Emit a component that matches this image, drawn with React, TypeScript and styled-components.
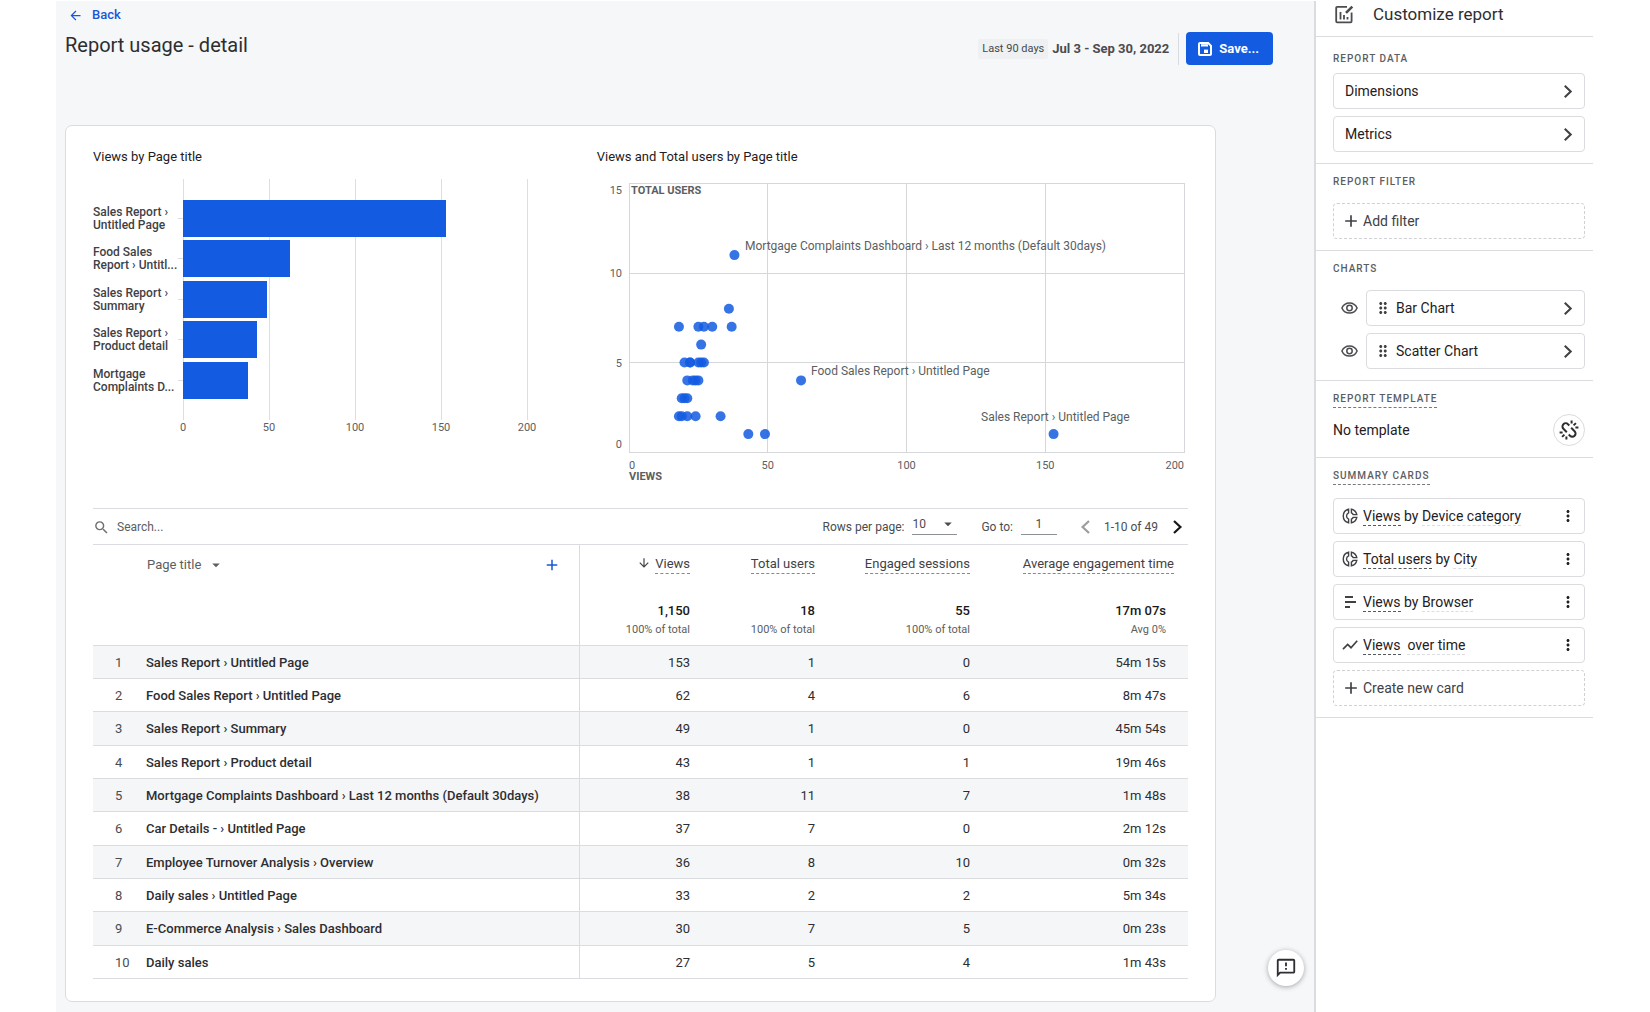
import React from "react";
import styled, { createGlobalStyle, css } from "styled-components";
import {
  MdAdd,
  MdArrowBack,
  MdArrowDownward,
  MdArrowDropDown,
  MdDragIndicator,
  MdMoreVert,
  MdOutlineFeedback,
  MdSearch,
} from "react-icons/md";

const color = {
  blue: "#135ce2",
  link: "#1a56d6",
  text: "#2d2e31",
  muted: "#5b5e62",
  line: "#dadce0",
  surface: "#f6f7f9",
};

const GlobalStyle = createGlobalStyle`
  *, *::before, *::after { box-sizing: border-box; }
  body {
    margin: 0;
    background: #fff;
    color: ${color.text};
    font-family: Roboto, "Liberation Sans", sans-serif;
    font-size: 13px;
  }
  button, input, select { font: inherit; color: inherit; }
`;

const Page = styled.div`
  display: flex;
  min-height: 100vh;
  padding: 1px 57px 0 56px;
`;

const Main = styled.main`
  position: relative;
  flex: 1;
  min-width: 0;
  padding: 5px 0 11px 9px;
  background: ${color.surface};
`;

const Header = styled.header`
  display: flex;
  justify-content: space-between;
  align-items: flex-end;
  margin: 0 41px 60px 0;
`;

const BackLink = styled.a`
  display: flex;
  align-items: center;
  gap: 9px;
  margin: 0 0 7px 3px;
  color: ${color.link};
  font-size: 13px;
  font-weight: 500;
  line-height: 18px;
  text-decoration: none;
`;

const PageTitle = styled.h1`
  margin: 0 0 6px;
  font-size: 20px;
  font-weight: 400;
  line-height: 28px;
`;

const Controls = styled.div`
  display: flex;
  align-items: center;
  height: 33px;
`;

const RangeChip = styled.span`
  padding: 0 4px;
  border-radius: 2px;
  background: #eef0f1;
  color: #46494d;
  font-size: 11px;
  line-height: 20px;
`;

const DateRange = styled.span`
  margin-left: 4px;
  color: #4a4c50;
  font-weight: 700;
`;

const SaveButton = styled.button`
  display: flex;
  align-items: center;
  gap: 7px;
  height: 33px;
  padding: 0 14px 0 12px;
  border: 0;
  border-radius: 4px;
  background: ${color.blue};
  color: #fff;
  font-weight: 700;
`;

const Divider = styled.span`
  width: 1px;
  height: 32px;
  margin: 0 7px 0 9px;
  background: ${color.line};
`;

const Card = styled.section`
  margin-right: 98px;
  padding: 23px 27px 22px;
  border: 1px solid ${color.line};
  border-radius: 7px;
  background: #fff;
`;

const Charts = styled.div`
  display: grid;
  grid-template-columns: 46fr 54fr;
  margin-bottom: 16px;
`;

const ChartTitle = styled.h2`
  margin: 0 0 7px;
  font-size: 13px;
  font-weight: 400;
  line-height: 16px;
  color: #1f2023;
`;

const ChartSvg = styled.svg`
  display: block;
  font-size: 12px;
  fill: ${color.muted};
`;

const Toolbar = styled.div`
  display: flex;
  align-items: center;
  justify-content: space-between;
  height: 36px;
  border-top: 1px solid ${color.line};
  color: ${color.muted};
  font-size: 12px;
`;

const SearchField = styled.label`
  display: flex;
  align-items: center;
  gap: 7px;
  padding-top: 1px;
  svg { color: #6b6e72; }
  input {
    width: 240px;
    padding: 0;
    border: 0;
    outline: 0;
    background: none;
  }
  input::placeholder { color: ${color.muted}; opacity: 1; }
`;

const Pager = styled.div`
  display: flex;
  align-items: center;
  padding-right: 5px;
  color: #4a4c50;
`;

const underlined = css`
  height: 20px;
  margin: 0 0 4px 8px;
  padding: 0;
  border: 0;
  border-bottom: 1px solid #8d9094;
  border-radius: 0;
  outline: 0;
  background: none;
`;

const RowsSelect = styled.span`
  position: relative;
  margin-right: 24px;
  select {
    ${underlined}
    width: 45px;
    appearance: none;
  }
  svg {
    position: absolute;
    right: 0;
    top: 0;
    pointer-events: none;
  }
`;

const PageInput = styled.input`
  ${underlined}
  width: 36px;
  margin-right: 23px;
  text-align: center;
`;

const PlainButton = styled.button`
  display: inline-flex;
  align-items: center;
  gap: 6px;
  padding: 0;
  border: 0;
  background: none;
`;

const PagerButton = styled(PlainButton)`
  color: #17181a;
  &:disabled { color: #9b9da1; }
`;

const PageRange = styled.span`
  margin: 0 14px 0 13px;
`;

const DataTable = styled.table`
  width: 100%;
  border-collapse: separate;
  border-spacing: 0;
  table-layout: fixed;
  font-size: 13px;
`;

const Col = styled.col<{ $width?: number }>`
  ${(p) => p.$width && css`width: ${p.$width}px;`}
`;

const Cell = styled.td<{ $divided?: boolean; $last?: boolean }>`
  padding: 0 ${(p) => (p.$last ? 22 : 12)}px 0 0;
  text-align: right;
  font-weight: 400;
  ${(p) => p.$divided && css`border-left: 1px solid ${color.line};`}
`;

const NameCell = styled.th`
  padding: 0;
  text-align: left;
  font-weight: 500;
  white-space: nowrap;
`;

const HeadRow = styled.tr`
  height: 48px;
  color: #3f4145;
  & > * {
    padding-top: 10px;
    border-top: 1px solid ${color.line};
    vertical-align: top;
    line-height: 18px;
    font-weight: 400;
  }
  & > *:last-child { padding-right: 14px; }
`;

const NameHead = styled.div`
  display: flex;
  justify-content: space-between;
  padding: 1px 18px 0 1px;
  color: ${color.muted};
`;

const Metric = styled.span`
  display: inline-block;
  border-bottom: 1px dashed #85888c;
`;

const SortIcon = styled(MdArrowDownward)`
  margin-right: 4px;
  vertical-align: -2px;
`;

const TotalsRow = styled.tr`
  height: 54px;
  & > * {
    padding-top: 10px;
    border-bottom: 1px solid ${color.line};
    vertical-align: top;
    color: #17181a;
    font-weight: 500;
    line-height: 18px;
  }
  small {
    display: block;
    color: ${color.muted};
    font-size: 11px;
    font-weight: 400;
    line-height: 20px;
  }
`;

const BodyRow = styled.tr`
  height: 33px;
  &:nth-child(3n) { height: 34px; }
  &:nth-child(odd) { background: #f5f6f8; }
  & > * { border-bottom: 1px solid ${color.line}; }
`;

const IndexCell = styled.td`
  padding: 0 0 0 22px;
  color: #4a4c50;
`;

const Fab = styled.button`
  position: absolute;
  right: 10px;
  bottom: 27px;
  display: grid;
  place-items: center;
  width: 36px;
  height: 36px;
  padding: 0;
  border: 0;
  border-radius: 50%;
  background: #fff;
  box-shadow: 0 1px 5px rgba(60, 64, 67, 0.45);
`;

const Sidebar = styled.aside`
  flex: none;
  width: 279px;
  border-left: 2px solid ${color.line};
`;

const SidebarHeader = styled.div`
  display: flex;
  align-items: center;
  gap: 19px;
  height: 36px;
  padding: 0 19px 9px;
  border-bottom: 1px solid ${color.line};
  h2 {
    margin: 0;
    font-size: 17px;
    font-weight: 400;
    line-height: 24px;
  }
`;

const Group = styled.section<{ $roomy?: boolean }>`
  padding: ${(p) => (p.$roomy ? 14 : 10)}px 8px 11px 17px;
  border-bottom: 1px solid ${color.line};
`;

const GroupTitle = styled.h3<{ $dashed?: boolean; $gap: number }>`
  width: fit-content;
  margin: 0 0 ${(p) => p.$gap}px;
  color: ${color.muted};
  font-size: 10px;
  font-weight: 500;
  letter-spacing: 1px;
  line-height: 16px;
  ${(p) => p.$dashed && css`border-bottom: 1px dashed #77797d;`}
`;

const Stack = styled.div`
  display: grid;
  gap: 7px;
`;

const box = css`
  display: flex;
  align-items: center;
  width: 100%;
  height: 36px;
  border: 1px solid ${color.line};
  border-radius: 4px;
  background: #fff;
  color: #1f2023;
  font-size: 14px;
  text-align: left;
`;

const NavButton = styled.button<{ $draggable?: boolean }>`
  ${box}
  gap: 4px;
  padding: 0 11px 0 ${(p) => (p.$draggable ? 7 : 11)}px;
  svg { color: #3f4145; }
  svg:last-child { margin-left: auto; }
`;

const AddButton = styled.button`
  ${box}
  gap: 2px;
  padding: 0 7px;
  border: 1px dashed #cfd1d4;
  color: #3f4145;
`;

const ChartRow = styled.div`
  display: grid;
  grid-template-columns: 33px 1fr;
  align-items: center;
  ${PlainButton} { justify-content: center; }
`;

const TemplateRow = styled.div`
  display: flex;
  justify-content: space-between;
  align-items: center;
  color: #1f2023;
  font-size: 14px;
`;

const RoundButton = styled.button`
  display: grid;
  place-items: center;
  width: 32px;
  height: 32px;
  padding: 0;
  border: 1px solid ${color.line};
  border-radius: 50%;
  background: #fff;
`;

const SummaryCard = styled.div`
  ${box}
  gap: 5px;
  padding: 0 7px 0 8px;
  ${PlainButton} { margin-left: auto; }
`;

const Term = styled.span<{ $faint?: boolean }>`
  padding-bottom: 1px;
  border-bottom: 1px dashed ${(p) => (p.$faint ? "#dcdee1" : "#55585c")};
`;

const Chevron = ({ left = false, size = 13 }: { left?: boolean; size?: number }) => (
  <svg width={Math.round(size * 0.75)} height={size} viewBox="0 0 9 12" fill="none" stroke="currentColor" strokeWidth="1.9">
    <path d={left ? "M7.5 0.8 2 6l5.5 5.2" : "M1.5 0.8 7 6l-5.5 5.2"} />
  </svg>
);

const SaveIcon = () => (
  <svg width="14" height="14" viewBox="0 0 14 14" fill="none" stroke="#fff" strokeWidth="2">
    <path d="M2 1h8.2L13 3.8V12a1 1 0 0 1-1 1H2a1 1 0 0 1-1-1V2a1 1 0 0 1 1-1Z" />
    <path d="M3 3.4h7" strokeWidth="2.4" stroke="#fff" />
    <path d="M3.500 5.400h6" strokeWidth="1.200" stroke={color.blue} />
    <rect x="6" y="7.600" width="4" height="3.400" fill="#fff" stroke="none" />
  </svg>
);

const EditChartIcon = () => (
  <svg width="19" height="19" viewBox="0 0 19 19" fill="none" stroke="#4a4c50" strokeWidth="1.8">
    <path d="M12 1.900H2.200a1 1 0 0 0-1 1v13.400a1 1 0 0 0 1 1h13.400a1 1 0 0 0 1-1V7.500" />
    <path d="M5.500 7v7.500M9 10v4.500M12.500 12v2.500" />
    <path d="m11 7.900 6.300-6.300" strokeWidth="2.600" />
  </svg>
);

const EyeIcon = () => (
  <svg width="17" height="12" viewBox="0 0 17 12" fill="none" stroke="#4a4c50" strokeWidth="1.500">
    <path d="M.9 6C2.300 2.800 5.100.9 8.500.9s6.200 1.900 7.600 5.100c-1.400 3.200-4.200 5.100-7.600 5.100S2.300 9.200.9 6Z" />
    <circle cx="8.500" cy="6" r="2.700" />
  </svg>
);

const DonutIcon = () => (
  <svg width="16" height="16" viewBox="0 0 16 16" fill="none" stroke="#3f4145" strokeWidth="1.400">
    <path d="M6.600 1.200A7 7 0 0 0 6.600 14.800V11.200A3.500 3.500 0 0 1 6.600 4.800Z" />
    <path d="M9.400 1.200A7 7 0 0 1 14.800 6.600H11.200A3.500 3.500 0 0 0 9.400 4.800Z" />
    <path d="M14.800 9.400A7 7 0 0 1 9.400 14.800V11.200A3.500 3.500 0 0 0 11.200 9.400Z" />
  </svg>
);

const BarsIcon = () => (
  <svg width="16" height="16" viewBox="0 0 16 16" fill="none" stroke="#3f4145" strokeWidth="2">
    <path d="M3 3h8M3 8h11M3 13h5" />
  </svg>
);

const TrendIcon = () => (
  <svg width="16" height="16" viewBox="0 0 16 16" fill="none" stroke="#3f4145" strokeWidth="1.700">
    <path d="M1 12.200 5.700 7.500l3.300 3.200L15.200 3.800" />
  </svg>
);

const UnlinkIcon = () => (
  <svg width="20" height="20" viewBox="0 0 20 20" fill="none" stroke="#2d2e31" strokeWidth="2">
    <path d="M10.300 5.400 9 4.200A3.200 3.200 0 0 0 4.400 8.800L7.800 12.200" />
    <path d="M9.700 14.600 11 15.800A3.200 3.200 0 0 0 15.600 11.200L12.200 7.800" />
    <path d="M12.600 3.600V.6M14.600 5.400l2.300-2.300M16.400 7.400H19.400M7.400 16.400v3M5.400 14.600l-2.300 2.300M3.600 12.600H.6" />
  </svg>
);

const bars = [
  { lines: ["Sales Report ›", "Untitled Page"], views: 153 },
  { lines: ["Food Sales", "Report › Untitl..."], views: 62 },
  { lines: ["Sales Report ›", "Summary"], views: 49 },
  { lines: ["Sales Report ›", "Product detail"], views: 43 },
  { lines: ["Mortgage", "Complaints D..."], views: 38 },
];

const BarChart = () => {
  const x = (v: number) => Math.round(90 + v * 1.72);
  const ticks = [0, 50, 100, 150, 200];
  return (
    <ChartSvg width="480" height="270" role="img" aria-label="Views by Page title">
      {ticks.map((t) => (
        <g key={t}>
          <rect x={x(t)} y="7" width="1" height="241" fill="#dcdee1" />
          <text x={x(t)} y="259" textAnchor="middle" fontSize="11">{t}</text>
        </g>
      ))}
      {bars.map((b, i) => {
        const y = Math.round(28 + i * 40.4);
        return (
          <g key={i}>
            <rect x="85" y={y + 18} width="5" height="1" fill="#dcdee1" />
            <rect x="90" y={y} width={x(b.views) - 90} height="37" fill={color.blue} />
            {b.lines.map((line, n) => (
              <text key={n} x="0" y={y + 16 + n * 13} fontSize="12" fontWeight="500" fill="#3f4145">{line}</text>
            ))}
          </g>
        );
      })}
    </ChartSvg>
  );
};

const points: [number, number][] = [
  [38, 11], [36, 8], [18, 7], [25, 7], [27, 7], [30, 7], [37, 7], [26, 6],
  [20, 5], [22, 5], [22, 5], [25, 5], [26, 5], [27, 5],
  [21, 4], [23, 4], [24, 4], [25, 4], [62, 4],
  [19, 3], [20, 3], [21, 3],
  [18, 2], [19, 2], [21, 2], [24, 2], [33, 2], [43, 1], [49, 1], [153, 1],
];

const ScatterChart = () => {
  const x = (v: number) => 32 + v * 2.775;
  const y = (u: number) => 280 - u * 17.9;
  return (
    <ChartSvg width="590" height="320" role="img" aria-label="Views and Total users by Page title">
      <g fill="none" stroke="#d5d7db" shapeRendering="crispEdges">
        <rect x={x(0)} y={y(15)} width={x(200) - x(0)} height={y(0) - y(15)} />
        {[50, 100, 150].map((t) => <path key={t} d={`M${x(t)} ${y(15)}V${y(0)}`} />)}
        {[5, 10].map((t) => <path key={t} d={`M${x(0)} ${y(t)}H${x(200)}`} />)}
      </g>
      {points.map(([v, u], i) => (
        <circle key={i} cx={x(v)} cy={y(u)} r="5" fill={color.blue} fillOpacity="0.85" />
      ))}
      <g textAnchor="end" fontSize="11">
        <text x="25" y="22">15</text>
        <text x="25" y="105">10</text>
        <text x="25" y="195">5</text>
        <text x="25" y="276">0</text>
        <text x="587" y="297">200</text>
      </g>
      <g textAnchor="middle" fontSize="11">
        <text x="35" y="297">0</text>
        <text x={x(50)} y="297">50</text>
        <text x={x(100)} y="297">100</text>
        <text x={x(150)} y="297">150</text>
      </g>
      <g fontSize="11" fontWeight="700">
        <text x="34" y="22">TOTAL USERS</text>
        <text x="32" y="308">VIEWS</text>
      </g>
      <text x="148" y="78">Mortgage Complaints Dashboard › Last 12 months (Default 30days)</text>
      <text x="214" y="203">Food Sales Report › Untitled Page</text>
      <text x="384" y="249">Sales Report › Untitled Page</text>
    </ChartSvg>
  );
};

const rows = [
  ["Sales Report › Untitled Page", "153", "1", "0", "54m 15s"],
  ["Food Sales Report › Untitled Page", "62", "4", "6", "8m 47s"],
  ["Sales Report › Summary", "49", "1", "0", "45m 54s"],
  ["Sales Report › Product detail", "43", "1", "1", "19m 46s"],
  ["Mortgage Complaints Dashboard › Last 12 months (Default 30days)", "38", "11", "7", "1m 48s"],
  ["Car Details - › Untitled Page", "37", "7", "0", "2m 12s"],
  ["Employee Turnover Analysis › Overview", "36", "8", "10", "0m 32s"],
  ["Daily sales › Untitled Page", "33", "2", "2", "5m 34s"],
  ["E-Commerce Analysis › Sales Dashboard", "30", "7", "5", "0m 23s"],
  ["Daily sales", "27", "5", "4", "1m 43s"],
];

const totals = [
  ["1,150", "100% of total"],
  ["18", "100% of total"],
  ["55", "100% of total"],
  ["17m 07s", "Avg 0%"],
];

const summaryCards = [
  { icon: <DonutIcon />, metric: "Views", joiner: "by", dimension: "Device category" },
  { icon: <DonutIcon />, metric: "Total users", joiner: "by", dimension: "City" },
  { icon: <BarsIcon />, metric: "Views", joiner: "by", dimension: "Browser" },
  { icon: <TrendIcon />, metric: "Views", joiner: "", dimension: "over time" },
];

const UsageTable = () => (
  <DataTable>
    <colgroup>
      <Col $width={53} />
      <Col />
      <Col $width={123} />
      <Col $width={125} />
      <Col $width={155} />
      <Col $width={206} />
    </colgroup>
    <thead>
      <HeadRow>
        <Cell as="td" />
        <NameCell scope="col">
          <NameHead>
            <PlainButton>Page title <MdArrowDropDown size={18} /></PlainButton>
            <PlainButton aria-label="Add dimension"><MdAdd size={18} color={color.link} /></PlainButton>
          </NameHead>
        </NameCell>
        <Cell as="th" scope="col" $divided><SortIcon size={14} /><Metric>Views</Metric></Cell>
        <Cell as="th" scope="col"><Metric>Total users</Metric></Cell>
        <Cell as="th" scope="col"><Metric>Engaged sessions</Metric></Cell>
        <Cell as="th" scope="col" $last><Metric>Average engagement time</Metric></Cell>
      </HeadRow>
      <TotalsRow>
        <Cell colSpan={2} />
        {totals.map(([value, note], i) => (
          <Cell key={i} $divided={i === 0} $last={i === 3}>{value}<small>{note}</small></Cell>
        ))}
      </TotalsRow>
    </thead>
    <tbody>
      {rows.map(([name, ...values], i) => (
        <BodyRow key={i}>
          <IndexCell>{i + 1}</IndexCell>
          <NameCell scope="row">{name}</NameCell>
          {values.map((value, n) => (
            <Cell key={n} $divided={n === 0} $last={n === 3}>{value}</Cell>
          ))}
        </BodyRow>
      ))}
    </tbody>
  </DataTable>
);

export default function App() {
  return (
    <>
      <GlobalStyle />
      <Page>
        <Main>
          <Header>
            <div>
              <BackLink href="#back"><MdArrowBack size={15} />Back</BackLink>
              <PageTitle>Report usage - detail</PageTitle>
            </div>
            <Controls>
              <RangeChip>Last 90 days</RangeChip>
              <DateRange>Jul 3 - Sep 30, 2022</DateRange>
              <Divider />
              <SaveButton><SaveIcon />Save...</SaveButton>
            </Controls>
          </Header>
          <Card>
            <Charts>
              <div>
                <ChartTitle>Views by Page title</ChartTitle>
                <BarChart />
              </div>
              <div>
                <ChartTitle>Views and Total users by Page title</ChartTitle>
                <ScatterChart />
              </div>
            </Charts>
            <Toolbar>
              <SearchField>
                <MdSearch size={17} />
                <input type="text" placeholder="Search..." aria-label="Search" />
              </SearchField>
              <Pager>
                <label htmlFor="rows">Rows per page:</label>
                <RowsSelect>
                  <select id="rows" defaultValue="10">
                    <option>10</option>
                    <option>25</option>
                    <option>50</option>
                  </select>
                  <MdArrowDropDown size={18} />
                </RowsSelect>
                <label htmlFor="goto">Go to:</label>
                <PageInput id="goto" type="text" defaultValue="1" />
                <PagerButton disabled aria-label="Previous page"><Chevron left size={14} /></PagerButton>
                <PageRange>1-10 of 49</PageRange>
                <PagerButton aria-label="Next page"><Chevron size={14} /></PagerButton>
              </Pager>
            </Toolbar>
            <UsageTable />
          </Card>
          <Fab aria-label="Send feedback"><MdOutlineFeedback size={22} /></Fab>
        </Main>
        <Sidebar>
          <SidebarHeader>
            <EditChartIcon />
            <h2>Customize report</h2>
          </SidebarHeader>
          <Group $roomy>
            <GroupTitle $gap={6}>REPORT DATA</GroupTitle>
            <Stack>
              <NavButton>Dimensions<Chevron /></NavButton>
              <NavButton>Metrics<Chevron /></NavButton>
            </Stack>
          </Group>
          <Group>
            <GroupTitle $gap={13}>REPORT FILTER</GroupTitle>
            <AddButton><MdAdd size={20} />Add filter</AddButton>
          </Group>
          <Group>
            <GroupTitle $gap={13}>CHARTS</GroupTitle>
            <Stack>
              {["Bar Chart", "Scatter Chart"].map((name) => (
                <ChartRow key={name}>
                  <PlainButton aria-label={`Toggle ${name}`}><EyeIcon /></PlainButton>
                  <NavButton $draggable><MdDragIndicator size={18} />{name}<Chevron /></NavButton>
                </ChartRow>
              ))}
            </Stack>
          </Group>
          <Group>
            <GroupTitle $dashed $gap={6}>REPORT TEMPLATE</GroupTitle>
            <TemplateRow>
              No template
              <RoundButton aria-label="Unlink template"><UnlinkIcon /></RoundButton>
            </TemplateRow>
          </Group>
          <Group>
            <GroupTitle $dashed $gap={13}>SUMMARY CARDS</GroupTitle>
            <Stack>
              {summaryCards.map((card, i) => (
                <SummaryCard key={i}>
                  {card.icon}
                  <span>
                    <Term>{card.metric}</Term> {card.joiner || "\u00a0"}{card.joiner && " "}
                    <Term $faint>{card.dimension}</Term>
                  </span>
                  <PlainButton aria-label="More options"><MdMoreVert size={18} /></PlainButton>
                </SummaryCard>
              ))}
              <AddButton><MdAdd size={20} />Create new card</AddButton>
            </Stack>
          </Group>
        </Sidebar>
      </Page>
    </>
  );
}
